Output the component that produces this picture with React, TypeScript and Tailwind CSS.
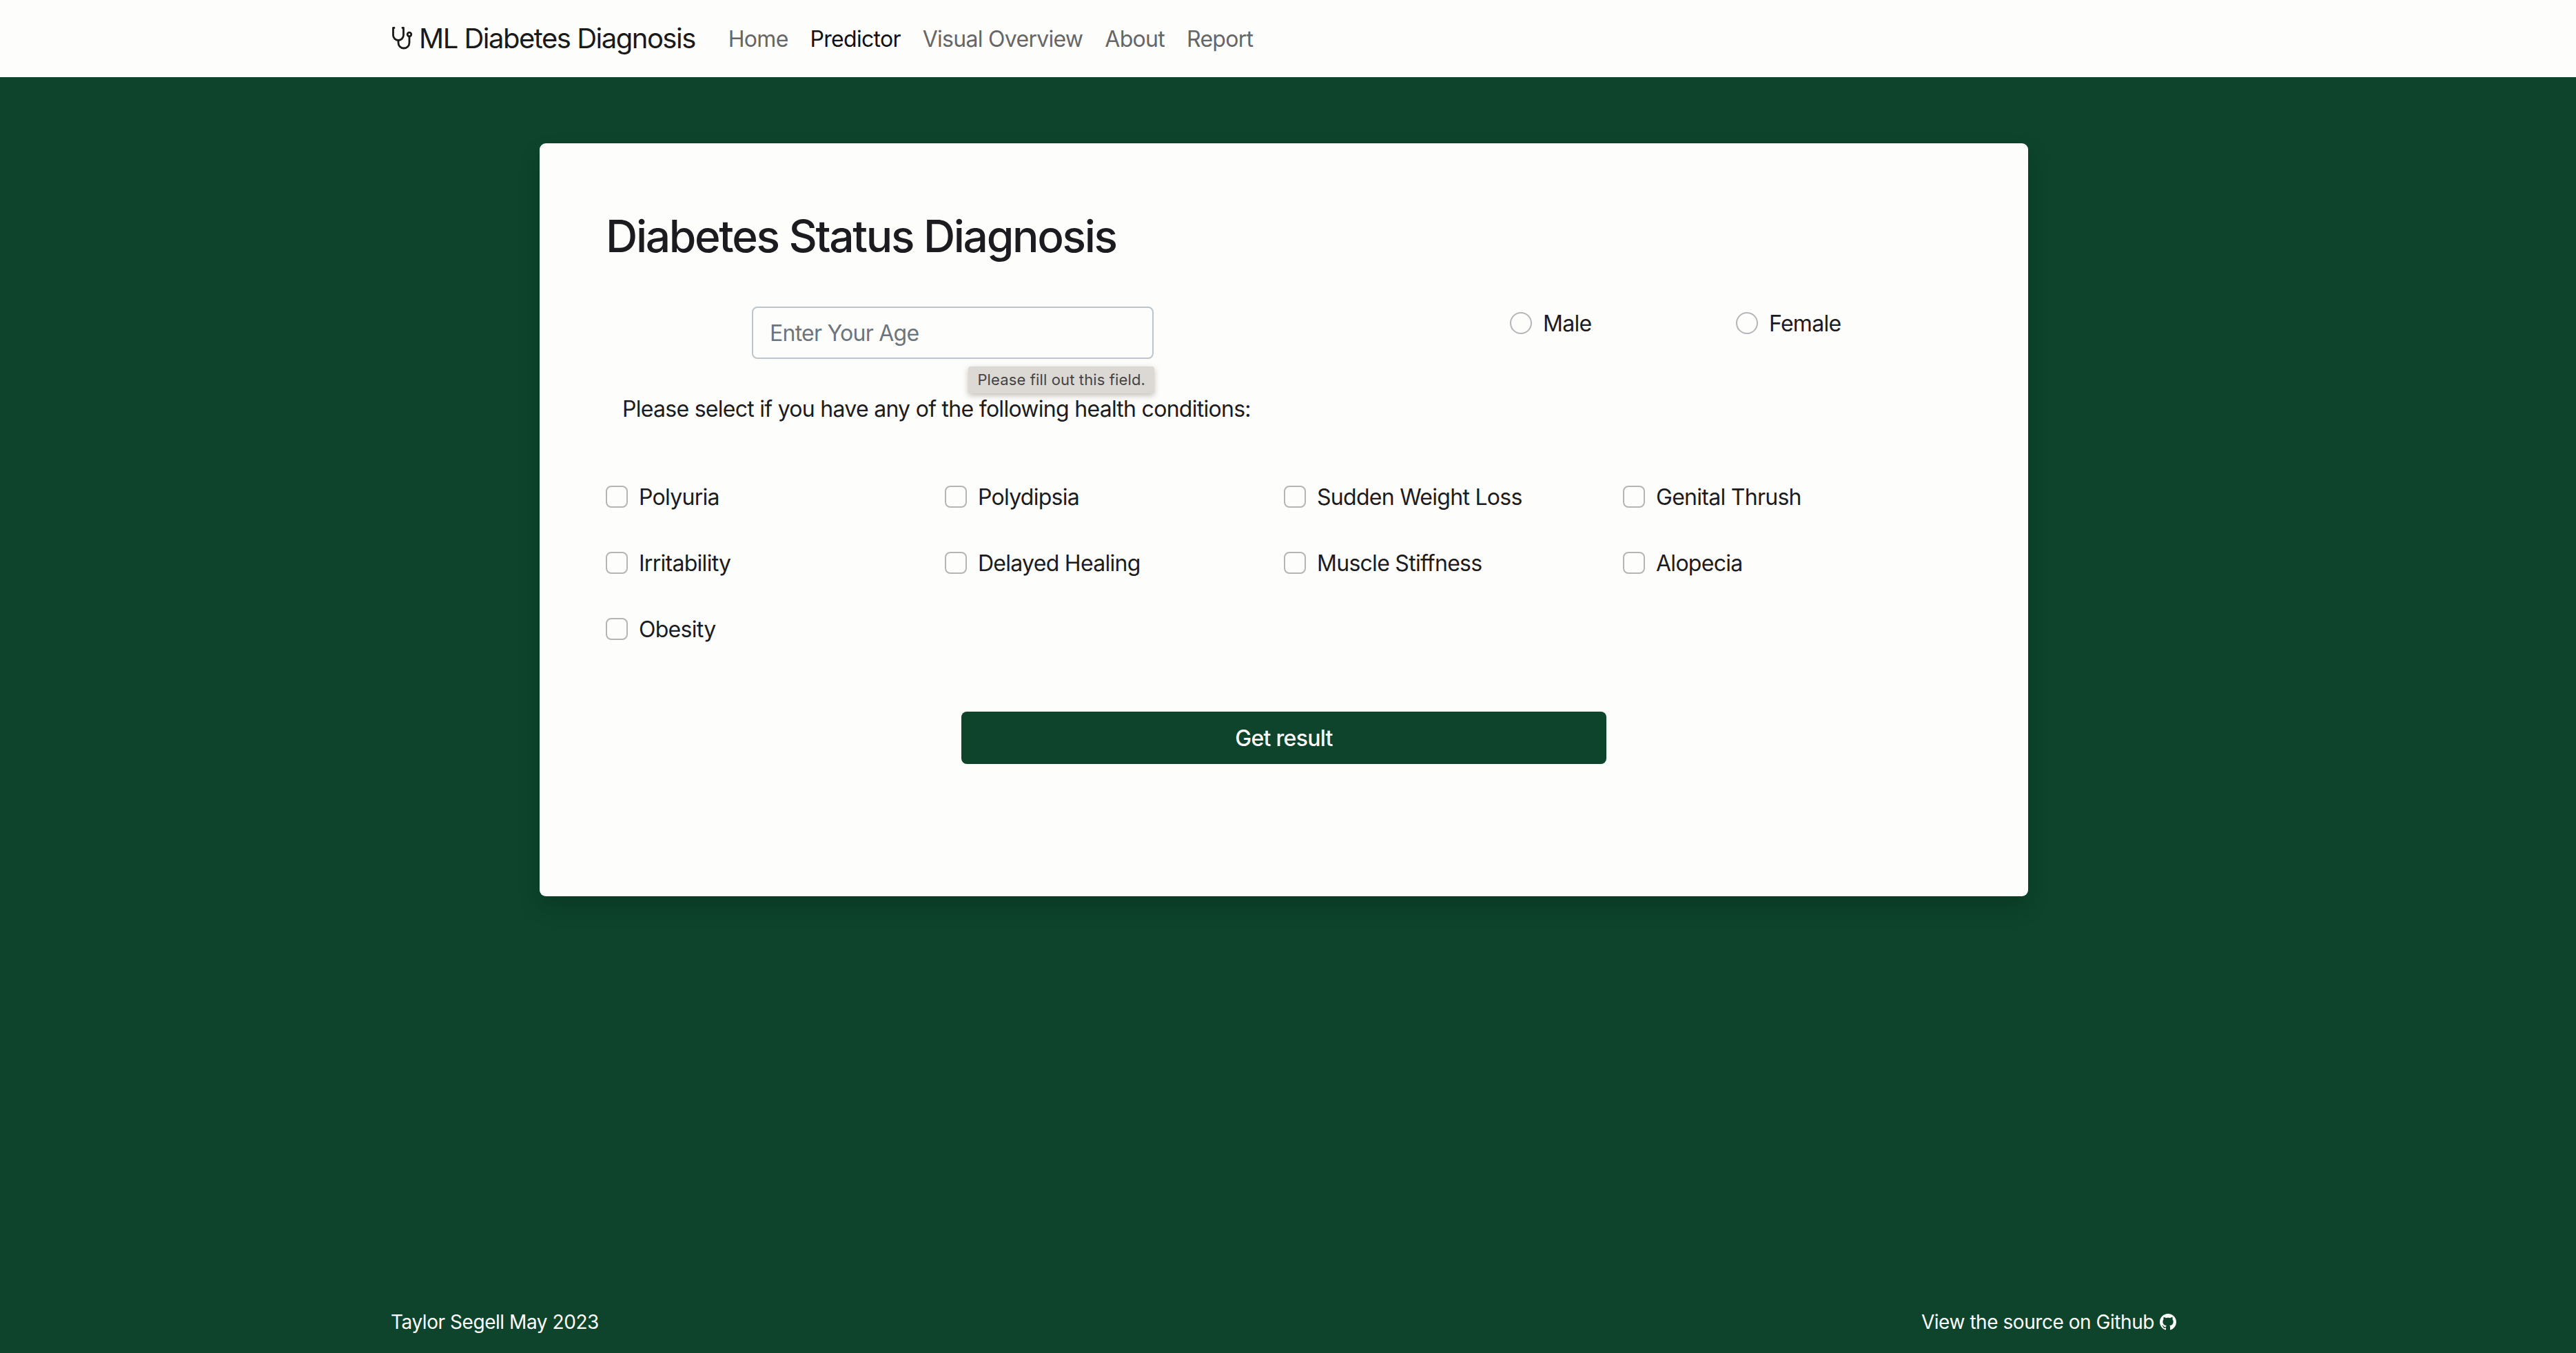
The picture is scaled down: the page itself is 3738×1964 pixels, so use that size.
import React from 'react';
import { BsGithub } from 'react-icons/bs';

const StethoscopeIcon: React.FC = () => (
  <svg xmlns="http://www.w3.org/2000/svg" className="h-[36px] w-[32px] shrink-0" viewBox="0 0 32 36" fill="none" stroke="currentColor" strokeWidth={2.8} strokeLinecap="round" strokeLinejoin="round">
    <path d="M5 2.5H3.5V13a7.5 7.5 0 0 0 15 0V2.5H17" />
    <path d="M11 20.5V24a8 8 0 0 0 16 0V15" />
    <circle cx="27" cy="12" r="2.8" />
  </svg>
);

const navLinks = [
  { label: 'Home', active: false },
  { label: 'Predictor', active: true },
  { label: 'Visual Overview', active: false },
  { label: 'About', active: false },
  { label: 'Report', active: false },
];

const conditions = [
  'Polyuria',
  'Polydipsia',
  'Sudden Weight Loss',
  'Genital Thrush',
  'Irritability',
  'Delayed Healing',
  'Muscle Stiffness',
  'Alopecia',
  'Obesity',
];

const App: React.FC = () => {
  return (
    <div className="min-h-screen flex flex-col bg-[#0d442b] font-['Inter',sans-serif] text-[32px] leading-[48px] tracking-[-0.72px] text-[#1c1c20]">
      <nav className="h-[112px] shrink-0 bg-[#fdfdfc] flex items-center pl-[567px]">
        <a href="#" className="flex items-center gap-[9px] text-[40px] leading-[60px] tracking-[-1.5px] text-[#1a1a1a] mr-[32px]">
          <StethoscopeIcon />
          ML Diabetes Diagnosis
        </a>
        <ul className="flex">
          {navLinks.map((link) => (
            <li key={link.label}>
              <a href="#" className={link.active ? 'block px-[16px] pt-[2px] text-[#111111]' : 'block px-[16px] pt-[2px] text-[#666666]'}>
                {link.label}
              </a>
            </li>
          ))}
        </ul>
      </nav>

      <main className="flex-1 flex justify-center pt-[96px] pr-[12px]">
        <div className="w-[2160px] h-[1093px] bg-[#fdfdfc] rounded-[9px] shadow-[0_16px_32px_rgba(0,0,0,0.15)] pt-[96px] px-[96px]">
          <h2 className="text-[64px] leading-[77px] font-[550] tracking-[-2.3px]">Diabetes Status Diagnosis</h2>

          <div className="flex items-start mt-[64px] h-[76px]">
            <div className="relative ml-[212px] w-[583px]">
              <input
                type="text"
                placeholder="Enter Your Age"
                className="w-full h-[76px] px-[24px] bg-[#fdfdfc] border-2 border-[#bcc5c9] rounded-[8px] outline-none tracking-[-0.75px] placeholder:text-[#6c757d]"
              />
              <div className="absolute top-[87px] right-[-1px] h-[39px] px-[13px] pb-[2px] flex items-center bg-[#dcd9d4] rounded-[4px] text-[22px] tracking-[0.13px] text-[#444444] shadow-[0_3px_8px_rgba(120,110,90,0.45)]">
                Please fill out this field.
              </div>
            </div>
            <label className="flex items-center gap-[16px] h-[48px] ml-[517px] w-[328px]">
              <input type="radio" name="gender" className="appearance-none size-[32px] bg-[#fdfdfc] border-2 border-[#b5b5b9] rounded-full" />
              <span className="mt-[2px]">Male</span>
            </label>
            <label className="flex items-center gap-[16px] h-[48px]">
              <input type="radio" name="gender" className="appearance-none size-[32px] bg-[#fdfdfc] border-2 border-[#b5b5b9] rounded-full" />
              <span className="mt-[2px]">Female</span>
            </label>
          </div>

          <p className="mt-[49px] ml-[24px]">Please select if you have any of the following health conditions:</p>

          <div className="grid grid-cols-4 gap-y-[48px] mt-[79px]">
            {conditions.map((name) => (
              <label key={name} className="flex items-center gap-[16px] h-[48px]">
                <input type="checkbox" className="appearance-none size-[32px] bg-[#fdfdfc] border-2 border-[#b5b5b5] rounded-[8px]" />
                <span className="mt-[2px]">{name}</span>
              </label>
            ))}
          </div>

          <div className="flex justify-center mt-[96px]">
            <button className="w-[936px] h-[76px] pt-[2px] bg-[#0d442b] rounded-[8px] text-[#fdfdfc] font-medium">Get result</button>
          </div>
        </div>
      </main>

      <footer className="shrink-0 flex justify-between pl-[567px] pr-[580px] pb-[24px] text-[28px] leading-[42px] tracking-[-0.45px] text-[#fdfdfc]">
        <span>Taylor Segell May 2023</span>
        <a href="#" className="flex items-center gap-[8px]">
          View the source on Github
          <BsGithub className="size-[24px]" />
        </a>
      </footer>
    </div>
  );
};

export default App;
